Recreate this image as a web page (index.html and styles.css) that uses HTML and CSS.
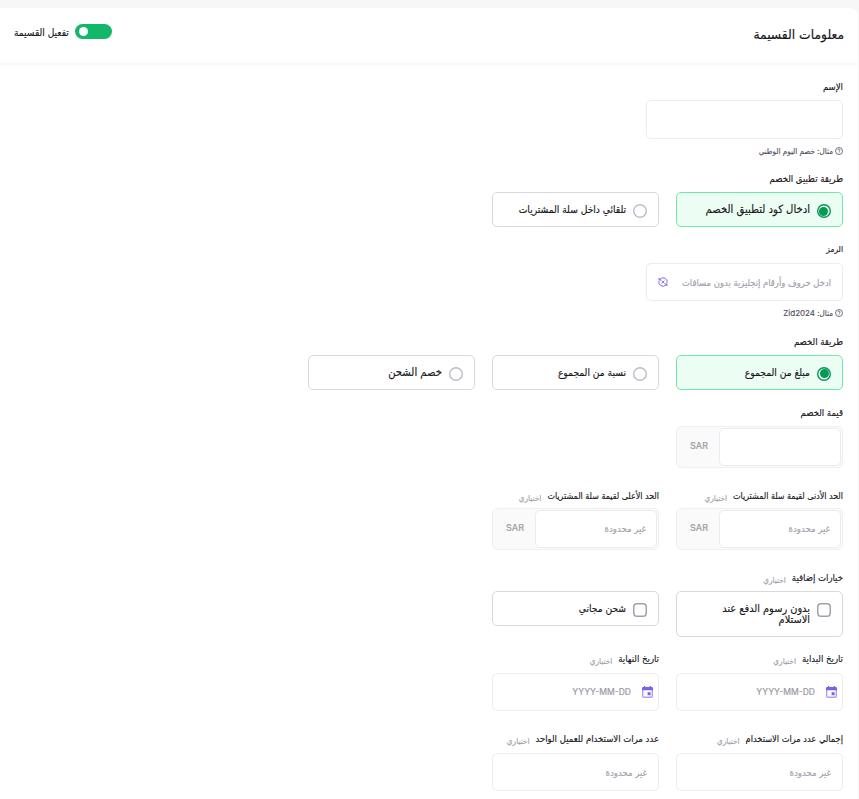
FILE: index.html
```html
<!DOCTYPE html>
<html lang="ar" dir="rtl">
<head>
	<meta charset="utf-8">
	<meta name="viewport" content="width=device-width, initial-scale=1">
	<title>معلومات القسيمة</title>
	<link rel="stylesheet" href="styles.css">
</head>
<body>
<svg class="sprite" width="0" height="0">
	<symbol id="icon-help" viewBox="0 0 8 8">
		<circle cx="4" cy="4" r="3.5" fill="none" stroke="currentColor" stroke-width=".8"/>
		<path d="M3 3.2a1 1 0 1 1 1.4.9Q4 4.3 4 4.8M4 5.5v.7" fill="none" stroke="currentColor" stroke-width=".8"/>
	</symbol>
	<symbol id="icon-calendar" viewBox="0 0 11 12">
		<path d="M.7 3v7.3q0 1 1 1h7.6q1 0 1-1V3" fill="none" stroke="currentColor" stroke-width="1.4" opacity=".6"/>
		<path d="M0 4.2V2.4Q0 1 1.3 1H2V0h1.2v1h4.6V0H9v1h.7Q11 1 11 2.4v1.8zM5.6 6.2h3v3h-3z" fill="currentColor"/>
	</symbol>
</svg>
<div class="card">
	<div class="card-header">
		<h1>معلومات القسيمة</h1>
		<div class="switch-content">
			<span class="switch"></span>
			<span class="switch-text">تفعيل القسيمة</span>
		</div>
	</div>
	<div class="card-body">
		<div class="field">
			<div class="label"><span>الإسم</span></div>
			<div class="input input-name"></div>
			<div class="hint"><svg><use href="#icon-help"/></svg><span>مثال: خصم اليوم الوطني</span></div>
		</div>

		<div class="field field-method">
			<div class="label"><span>طريقة تطبيق الخصم</span></div>
			<div class="row">
				<div class="option option-wide active"><i class="radio radio-low"></i><span>ادخال كود لتطبيق الخصم</span></div>
				<div class="option"><i class="radio"></i><span>تلقائي داخل سلة المشتريات</span></div>
			</div>
		</div>

		<div class="field field-code">
			<div class="label label-short"><span>الرمز</span></div>
			<div class="input input-code">
				<span>ادخل حروف وأرقام إنجليزية بدون مسافات</span>
				<svg viewBox="0 0 10 10">
					<path d="M.9 4.2A4.1 4.1 0 0 0 7.8 8M9.1 5.8A4.1 4.1 0 0 0 2.2 2" fill="none" stroke="currentColor"/>
					<path d="M.6.6v3h3zM9.4 9.4v-3h-3z" fill="currentColor"/>
					<path d="M3.6 3.6l2.8 2.8M6.4 3.6L3.6 6.4" stroke="currentColor" stroke-width=".9"/>
				</svg>
			</div>
			<div class="hint"><svg><use href="#icon-help"/></svg><span>مثال: Zid2024</span></div>
		</div>

		<div class="field field-type">
			<div class="label"><span>طريقة الخصم</span></div>
			<div class="row">
				<div class="option active"><i class="radio"></i><span>مبلغ من المجموع</span></div>
				<div class="option"><i class="radio"></i><span>نسبة من المجموع</span></div>
				<div class="option option-wide"><i class="radio"></i><span>خصم الشحن</span></div>
			</div>
		</div>

		<div class="field field-value">
			<div class="label"><span>قيمة الخصم</span></div>
			<div class="group"><div class="group-input"></div><div class="group-unit">SAR</div></div>
		</div>

		<div class="row field-limits">
			<div class="col">
				<div class="label"><span>الحد الأدنى لقيمة سلة المشتريات</span><small>اختياري</small></div>
				<div class="group"><div class="group-input"><span>غير محدودة</span></div><div class="group-unit">SAR</div></div>
			</div>
			<div class="col">
				<div class="label"><span>الحد الأعلى لقيمة سلة المشتريات</span><small>اختياري</small></div>
				<div class="group"><div class="group-input"><span>غير محدودة</span></div><div class="group-unit">SAR</div></div>
			</div>
		</div>

		<div class="field field-extra">
			<div class="label"><span>خيارات إضافية</span><small>اختياري</small></div>
			<div class="row">
				<div class="option option-tall"><i class="checkbox"></i><span>بدون رسوم الدفع عند<br>الاستلام</span></div>
				<div class="option"><i class="checkbox"></i><span>شحن مجاني</span></div>
			</div>
		</div>

		<div class="row field-dates">
			<div class="col">
				<div class="label"><span>تاريخ البداية</span><small>اختياري</small></div>
				<div class="input input-date"><svg><use href="#icon-calendar"/></svg><span>YYYY-MM-DD</span></div>
			</div>
			<div class="col">
				<div class="label"><span>تاريخ النهاية</span><small>اختياري</small></div>
				<div class="input input-date"><svg><use href="#icon-calendar"/></svg><span>YYYY-MM-DD</span></div>
			</div>
		</div>

		<div class="row field-usage">
			<div class="col">
				<div class="label label-total"><span>إجمالي عدد مرات الاستخدام</span><small>اختياري</small></div>
				<div class="input"><span>غير محدودة</span></div>
			</div>
			<div class="col">
				<div class="label"><span>عدد مرات الاستخدام للعميل الواحد</span><small>اختياري</small></div>
				<div class="input"><span>غير محدودة</span></div>
			</div>
		</div>
	</div>
</div>
</body>
</html>
```
FILE: styles.css
```css
body, h1 {
	margin: 0
}

i {
	font-style: normal
}

* {
	box-sizing: border-box;
}

body {
	height: 799px;
	overflow: hidden;
	padding-top: 8px;
	background-color: #f7f7f7;
	font-family: Inter, "DejaVu Sans Condensed", "DejaVu Sans", sans-serif;
	font-size: 9.5px;
	color: #18181b;
	-webkit-text-stroke: .15px;
}

.sprite {
	position: absolute;
}

.card {
	height: 800px;
	margin-right: 1px;
	background-color: #ffffff;
	border-top-right-radius: 8px;
}

.card-header {
	display: flex;
	justify-content: space-between;
	height: 57px;
	padding: 0 14px 0 14px;
	border-bottom: 2px solid #f8f8f8;
}

h1 {
	font-size: 13.7px;
	font-weight: normal;
	line-height: 53px;
	white-space: nowrap;
}

.switch-content {
	display: flex;
	align-items: center;
	height: 47px;
	font-size: 10.1px;
}

.switch {
	width: 37px;
	height: 15px;
	padding: 3px 4px;
	margin-left: 6px;
	border-radius: 8px;
	background-color: #12b76a;
	direction: ltr;
}

.switch:before {
	content: "";
	display: block;
	width: 9px;
	height: 9px;
	border-radius: 50%;
	background-color: #ffffff;
}

.card-body {
	padding: 14px 15px 0 0;
}

.row {
	display: flex;
	align-items: flex-start;
	gap: 17px;
}

.col {
	width: 167px;
}

.label {
	display: flex;
	align-items: center;
	height: 16px;
	padding-bottom: 2px;
	margin-bottom: 5px;
	white-space: nowrap;
}

.label-short {
	font-size: 8.4px;
}

.label small {
	margin: 6px 6px 0 0;
	font-size: 8.2px;
	color: #a1a1aa;
}

.input {
	display: flex;
	align-items: center;
	height: 38px;
	padding: 0 11px;
	border: 1px solid #ececee;
	border-radius: 5px;
	color: #a1a1aa;
	white-space: nowrap;
}

.input-name, .input-code {
	width: 197px;
}

.input-name {
	height: 39px;
}

.input-code {
	justify-content: space-between;
}

.input-code span {
	font-size: 9.4px;
}

.input-code svg {
	width: 10px;
	height: 10px;
	color: #7c68ee;
}

.input-date {
	padding: 0 5px;
	font-size: 8.5px;
	font-weight: 500;
}

.input-date svg {
	width: 11px;
	height: 12px;
	margin-left: 11px;
	color: #7562ee;
}

.hint {
	display: flex;
	align-items: center;
	height: 16px;
	margin-top: 4px;
	font-size: 8px;
	color: #52525b;
	white-space: nowrap;
}

.hint svg {
	width: 8px;
	height: 8px;
	margin-left: 2px;
}

.option {
	display: flex;
	align-items: center;
	width: 167px;
	height: 35px;
	padding: 0 11px;
	border: 1px solid #d9d9dc;
	border-radius: 5px;
	font-size: 10.2px;
	line-height: 11px;
	white-space: nowrap;
}

.option-wide {
	font-size: 11.2px;
}

.option.active {
	border-color: #6ce9a6;
	background-color: #ecfdf3;
}

.radio, .checkbox {
	width: 14px;
	height: 14px;
	margin: 2px 0 0 7px;
	border-radius: 50%;
	box-shadow: inset 0 0 0 1.4px #bdbdc5;
}

.checkbox {
	border-radius: 4px;
	box-shadow: inset 0 0 0 1.5px #a1a1aa;
}

.active .radio {
	padding: 2.5px;
	box-shadow: inset 0 0 0 1.4px #039855;
}

.active .radio:before {
	content: "";
	display: block;
	width: 9px;
	height: 9px;
	border-radius: 50%;
	background-color: #039855;
}

.active .radio-low {
	padding: 3.5px;
}

.option-tall {
	align-items: flex-start;
	height: 46px;
	padding-top: 11px;
	font-size: 10.9px;
}

.option-tall .checkbox {
	margin-top: 0;
}

.group {
	display: flex;
	width: 167px;
	height: 42px;
	padding: 1px;
	border: 1px solid #f0f0f1;
	border-radius: 5px;
	background-color: #fafafa;
}

.group-input {
	display: flex;
	align-items: center;
	width: 122px;
	padding: 0 10px 2px;
	border: 1px solid #ececee;
	border-radius: 5px;
	background-color: #ffffff;
	color: #a1a1aa;
	white-space: nowrap;
}

.group-unit {
	flex: 1;
	padding-left: 1px;
	font-size: 9px;
	font-weight: 500;
	line-height: 36px;
	text-align: center;
	color: #a1a1aa;
}

.field-method {
	margin-top: 12px;
}

.field-code {
	margin-top: 15px;
}

.field-type {
	margin-top: 13px;
}

.field-value {
	margin-top: 15px;
}

.field-limits, .field-extra, .field-usage {
	margin-top: 20px;
}

.field-limits .label {
	margin-bottom: 4px;
	font-size: 8.9px;
}

.field-dates {
	margin-top: 14px;
}

.field-dates .label, .field-usage .label {
	margin-bottom: 6px;
}

.label-total {
	font-size: 9.2px;
}
```
